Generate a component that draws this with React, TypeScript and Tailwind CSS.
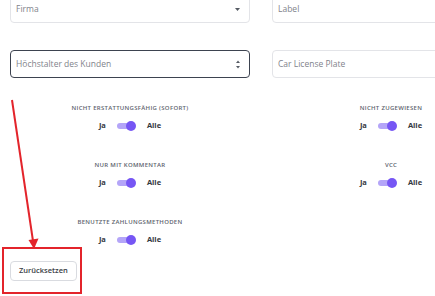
import React from "react"

const font = { fontFamily: '"Open Sans", "Noto Sans", Arial, sans-serif' }

function Toggle() {
  return (
    <div className="relative w-[19px] h-[10px]">
      <div className="absolute left-0 top-[2px] w-[15px] h-[6px] rounded-full bg-[#b4a5f8]" />
      <div className="absolute right-0 top-0 w-[10px] h-[10px] rounded-full bg-[#7656f4]" />
    </div>
  )
}

function FilterToggle({ label }: { label: string }) {
  return (
    <div className="flex flex-col items-center">
      <div className="text-[6px] leading-[8px] font-semibold uppercase tracking-[0.3px] text-[#60646e] whitespace-nowrap">
        {label}
      </div>
      <div className="mt-[8px] flex items-center gap-[11px] h-[11px]">
        <span className="text-[7.5px] font-bold text-[#343741]">Ja</span>
        <Toggle />
        <span className="text-[7.5px] font-bold text-[#343741]">Alle</span>
      </div>
    </div>
  )
}

function Field({ placeholder, focused, icon }: { placeholder: string; focused?: boolean; icon?: "caret" | "spin" }) {
  return (
    <div
      className={
        "h-[28px] rounded-[4px] border flex items-center justify-between pl-[5px] pr-[9px] bg-white " +
        (focused ? "border-[#3d4350]" : "border-[#e3e4e8]")
      }
    >
      <span className="text-[8.5px] text-[#7f838b] whitespace-nowrap">{placeholder}</span>
      {icon === "caret" && (
        <svg width="5" height="3" viewBox="0 0 5 3">
          <polygon points="0,0 5,0 2.5,3" fill="#555a63" />
        </svg>
      )}
      {icon === "spin" && (
        <svg width="4" height="9" viewBox="0 0 4 9">
          <polygon points="0,3 4,3 2,0.5" fill="#555a63" />
          <polygon points="0,6 4,6 2,8.5" fill="#555a63" />
        </svg>
      )}
    </div>
  )
}

export default function App() {
  return (
    <div className="relative w-[435px] h-[296px] overflow-hidden bg-white" style={font}>
      <div className="pl-[10px] -mt-[5px] grid grid-cols-[240px_238px] gap-x-[22px] gap-y-[27px]">
        <Field placeholder="Firma" icon="caret" />
        <Field placeholder="Label" />
        <Field placeholder="Höchstalter des Kunden" focused icon="spin" />
        <Field placeholder="Car License Plate" />
      </div>

      <div className="pl-[10px] mt-[26px] grid grid-cols-[240px_238px] gap-x-[22px] gap-y-[30px]">
        <FilterToggle label="Nicht erstattungsfähig (Sofort)" />
        <FilterToggle label="Nicht zugewiesen" />
        <FilterToggle label="Nur mit Kommentar" />
        <FilterToggle label="VCC" />
        <FilterToggle label="Benutzte Zahlungsmethoden" />
      </div>

      <div className="ml-[2px] mt-[2px] w-[80px] h-[47px] border-2 border-[#e3242b] flex items-center pl-[6px]">
        <button className="h-[20px] px-[8px] rounded-[4px] border border-[#d9dbe0] bg-white text-[7.5px] font-semibold text-[#3a3d45]">
          Zurücksetzen
        </button>
      </div>

      <svg className="absolute left-0 top-0 pointer-events-none" width="435" height="296">
        <line x1="12" y1="100" x2="33" y2="241" stroke="#e3242b" strokeWidth="2" />
        <polygon points="28.5,240 38.5,238.5 34,249" fill="#e3242b" />
      </svg>
    </div>
  )
}
